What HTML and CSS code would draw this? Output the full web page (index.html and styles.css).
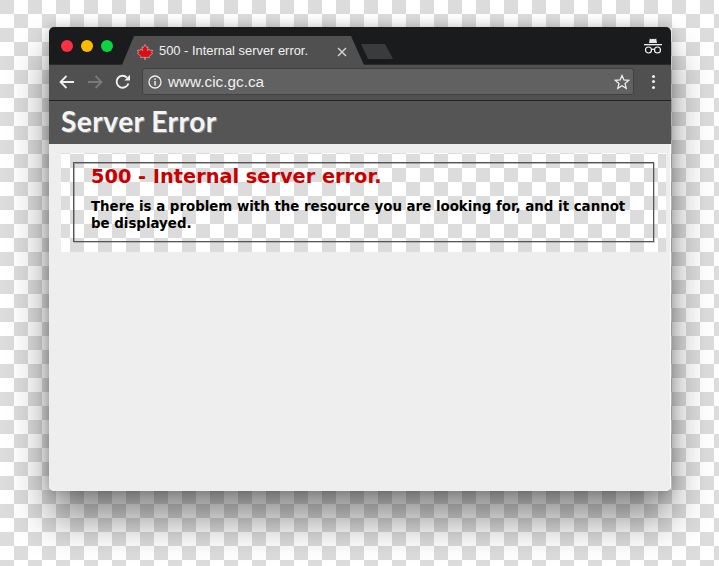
FILE: index.html
```html
<!DOCTYPE html>
<html lang="en">
<head>
<meta charset="utf-8">
<title>500 - Internal server error.</title>
<link rel="stylesheet" href="styles.css">
</head>
<body>
<div class="window">
  <div class="tabbar">
    <div class="lights">
      <span class="light red"></span>
      <span class="light amber"></span>
      <span class="light green"></span>
    </div>
    <div class="tab">
      <svg class="leaf" width="16" height="16" viewBox="0 0 16 16"><path d="M8 0.5 L9.6 3.4 L11 2.8 L10.4 6.6 L12.2 5 L12.8 6.4 L15.5 6 L14.6 8.8 L15.6 9.4 L12 12.4 L12.4 13.6 L8.4 13.2 L8.4 15.5 L7.6 15.5 L7.6 13.2 L3.6 13.6 L4 12.4 L0.4 9.4 L1.4 8.8 L0.5 6 L3.2 6.4 L3.8 5 L5.6 6.6 L5 2.8 L6.4 3.4 Z" fill="#d80f16" stroke="#f4d8d8" stroke-width=".5"/></svg>
      <span class="tab-title">500 - Internal server error.</span>
      <svg class="tab-close" width="10" height="10" viewBox="0 0 10 10"><path d="M1 1 L9 9 M9 1 L1 9" stroke="#d0d0d0" stroke-width="1.5"/></svg>
    </div>
    <div class="newtab"></div>
    <svg class="incognito" width="20" height="18" viewBox="0 0 20 18"><path d="M6 6 L6.8 1.5 L8.4 2.2 L10 1.8 L11.6 2.2 L13.2 1.5 L14 6 Z" fill="#e8e8e8"/><rect x="1" y="7" width="18" height="1.3" fill="#f2f2f2"/><circle cx="5.5" cy="13" r="3" fill="none" stroke="#f2f2f2" stroke-width="1.2"/><circle cx="14.5" cy="13" r="3" fill="none" stroke="#f2f2f2" stroke-width="1.2"/><path d="M8.5 12.6 Q10 11.6 11.5 12.6" fill="none" stroke="#f2f2f2" stroke-width="1.1"/></svg>
  </div>
  <div class="toolbar">
    <svg class="nav" width="18" height="18" viewBox="0 0 18 18"><path d="M16 9 H3 M8.5 3 L2.5 9 L8.5 15" fill="none" stroke="#f0f0f0" stroke-width="1.8"/></svg>
    <svg class="nav" width="18" height="18" viewBox="0 0 18 18"><path d="M2 9 H15 M9.5 3 L15.5 9 L9.5 15" fill="none" stroke="#7a7a7a" stroke-width="1.8"/></svg>
    <svg class="nav" width="18" height="18" viewBox="0 0 18 18"><path d="M14.4 10.4 A6 6 0 1 1 13 4.6" fill="none" stroke="#f0f0f0" stroke-width="1.9"/><path d="M10.4 7.4 H16 V1.8 Z" fill="#f0f0f0"/></svg>
    <div class="omnibox">
      <svg class="info" width="14" height="14" viewBox="0 0 14 14"><circle cx="7" cy="7" r="6" fill="none" stroke="#eee" stroke-width="1.3"/><rect x="6.3" y="6" width="1.5" height="4.5" fill="#eee"/><rect x="6.3" y="3.4" width="1.5" height="1.5" fill="#eee"/></svg>
      <span class="url">www.cic.gc.ca</span>
      <svg class="star" width="16" height="16" viewBox="0 0 16 16"><path d="M8 1.6 L9.9 6 L14.7 6.4 L11.1 9.6 L12.2 14.3 L8 11.8 L3.8 14.3 L4.9 9.6 L1.3 6.4 L6.1 6 Z" fill="none" stroke="#eee" stroke-width="1.3"/></svg>
    </div>
    <div class="menu"><span></span><span></span><span></span></div>
  </div>
  <header class="site-header"><h1>Server Error</h1></header>
  <main class="page">
    <div class="hole">
      <div class="message">
        <h2>500 - Internal server error.</h2>
        <h3>There is a problem with the resource you are looking for, and it cannot be displayed.</h3>
      </div>
    </div>
  </main>
</div>
</body>
</html>
```
FILE: styles.css
```css
* { box-sizing: border-box; }
html, body { height: 100%; margin: 0; }
body {
  padding: 27px 48px 75px 49px;
  overflow: hidden;
  background-color: #fff;
  background-image: conic-gradient(#fff 25%, #dcdcdc 0 50%, #fff 0 75%, #dcdcdc 0);
  background-size: 28px 28px;
}
.window {
  height: 464px;
  display: flex;
  flex-direction: column;
  border-radius: 5px;
  overflow: hidden;
  background: #eee;
  box-shadow: 0 28px 40px rgba(0, 0, 0, .45), 0 0 12px rgba(0, 0, 0, .22);
}
.tabbar {
  height: 38px;
  flex: none;
  display: flex;
  align-items: flex-end;
  background: #1a1b1d;
  border-bottom: 1px solid #2a2a2a;
}
.lights {
  display: flex;
  gap: 8px;
  width: 73px;
  padding: 0 0 12px 12px;
  align-self: flex-end;
}
.light { width: 12px; height: 12px; border-radius: 50%; }
.red { background: #fc3041; }
.amber { background: #fdbb00; }
.green { background: #0fd43f; }
.tab {
  width: 242px;
  height: 29px;
  display: flex;
  align-items: center;
  padding: 2px 17px 0 15px;
  margin-bottom: -1px;
  background: #505050;
  clip-path: polygon(0 100%, 12px 0, 229px 0, 100% 100%);
  font: 12.9px/1 "Liberation Sans", Arial, sans-serif;
  color: #f0f0f0;
}
.leaf { flex: none; margin-right: 6px; }
.tab-title { flex: 1; white-space: nowrap; }
.tab-close { flex: none; }
.newtab {
  width: 32px;
  height: 15px;
  margin: 0 0 5px -3px;
  background: #3a3b3c;
  clip-path: polygon(0 0, 24px 0, 100% 100%, 7px 100%);
}
.incognito { margin: 0 8px 9px auto; flex: none; }
.toolbar {
  height: 36px;
  flex: none;
  display: flex;
  align-items: center;
  gap: 10px;
  padding: 0 10px 2px 9px;
  background: #505050;
  border-bottom: 1px solid #222;
}
.nav { flex: none; }
.omnibox {
  flex: 1;
  height: 27px;
  display: flex;
  align-items: center;
  gap: 6px;
  padding: 0 3px 0 5px;
  background: #616161;
  border: 1px solid #414141;
  border-radius: 3px;
  font: 15.3px/1 "Liberation Sans", Arial, sans-serif;
  color: #f0f0f0;
}
.url { flex: 1; }
.star { flex: none; }
.menu {
  width: 16px;
  margin-left: 1px;
  display: flex;
  flex-direction: column;
  align-items: center;
  gap: 2.5px;
}
.menu span { width: 3px; height: 3px; border-radius: 50%; background: #eee; }
.site-header {
  height: 43px;
  flex: none;
  padding-left: 12px;
  background: #555;
}
.site-header h1 {
  margin: 0;
  font: 700 28px/41px "Lato", "Open Sans", sans-serif;
  letter-spacing: .52px;
  color: #f4f4f4;
  text-shadow: 1px 1px 0 rgba(255, 255, 255, .35);
  white-space: nowrap;
}
.page {
  flex: 1;
  padding: 9px 4px 0 12px;
  background: #eee;
  border-right: 1px solid #fff;
}
.hole {
  height: 99px;
  padding: 9px 12px 0 12px;
  background-color: #fff;
  background-image: conic-gradient(#fff 25%, #dcdcdc 0 50%, #fff 0 75%, #dcdcdc 0);
  background-size: 28px 28px;
  background-attachment: fixed;
}
.message {
  height: 80px;
  padding: 0 17px;
  border: 1px solid #555;
  box-shadow: inset 1px 1px 0 rgba(85, 85, 85, .45), 1px 1px 0 rgba(85, 85, 85, .3);
  font-family: "DejaVu Sans", Verdana, sans-serif;
}
.message h2 {
  margin: 0;
  padding-top: 2px;
  font-size: 19.33px;
  line-height: 24px;
  font-weight: 700;
  color: #c80000;
}
.message h3 {
  margin: 9px 0 0;
  font-size: 13.37px;
  line-height: 17px;
  font-weight: 700;
  color: #000;
}
```
